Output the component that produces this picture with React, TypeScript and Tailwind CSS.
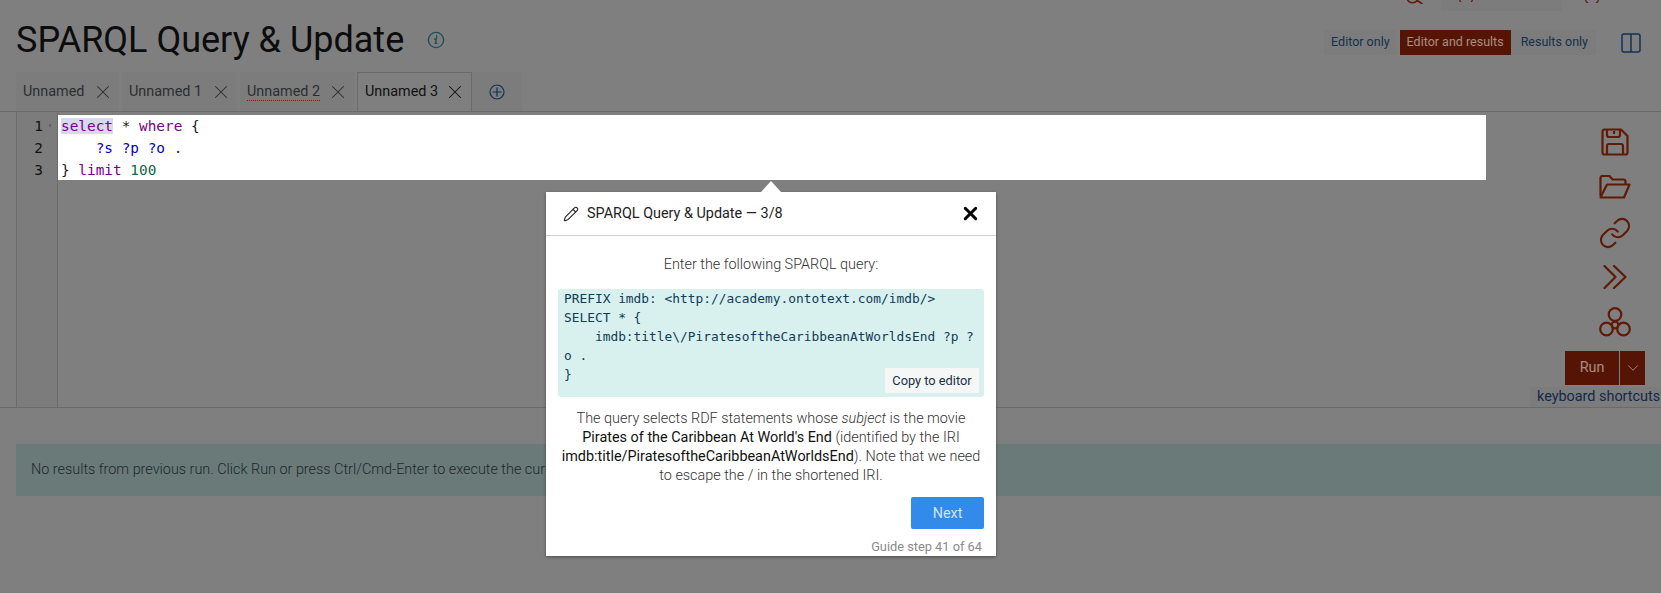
import { Pencil, X, ChevronDown, Link } from 'lucide-react';

const tabs = [
  { name: 'Unnamed', width: 'w-[103px]' },
  { name: 'Unnamed 1', width: 'w-[115px]' },
  { name: 'Unnamed 2', width: 'w-[114px]', warn: true },
];

const mono = "font-['DejaVu_Sans_Mono',monospace]";
const red = '#601a06';

function InfoIcon() {
  return (
    <svg width="18" height="18" viewBox="0 0 18 18" fill="none" stroke="#1f5058" strokeWidth="1.4">
      <circle cx="9" cy="9" r="7.6" />
      <path d="M7.6 8h1.8l-1 4.4h1.6M9.6 4.8v1.4" strokeLinecap="round" />
    </svg>
  );
}

function SaveIcon() {
  return (
    <svg width="28" height="28" viewBox="0 0 28 28" fill="none" stroke={red} strokeWidth="2.2" strokeLinejoin="round">
      <path d="M3 1.5h17l6.5 6.5v16.5a2 2 0 0 1-2 2h-21a2 2 0 0 1-2-2v-21a2 2 0 0 1 2-2z" />
      <path d="M6 2v5a2 2 0 0 0 2 2h9a2 2 0 0 0 2-2V2M13 3v3M6 26v-8a2 2 0 0 1 2-2h12a2 2 0 0 1 2 2v8" />
    </svg>
  );
}

function FolderIcon() {
  return (
    <svg width="32" height="24" viewBox="0 0 32 24" fill="none" stroke={red} strokeWidth="2.2" strokeLinejoin="round">
      <path d="M1.5 21V3a2 2 0 0 1 2-2h7l3 3.5h11a2 2 0 0 1 2 2V9" />
      <path d="M1.5 22.5L8 9.5h22.5l-5.5 13z" />
    </svg>
  );
}

function DoubleChevron() {
  return (
    <svg width="24" height="24" viewBox="0 0 24 24" fill="none" stroke={red} strokeWidth="2.2" strokeLinecap="round" strokeLinejoin="round">
      <path d="M1.5 1l11 11-11 11M11 1l11.5 11L11 23" />
    </svg>
  );
}

function ClusterIcon() {
  return (
    <svg width="32" height="30" viewBox="0 0 32 30" fill="none" stroke={red} strokeWidth="2.2">
      <circle cx="16" cy="7.5" r="6.3" />
      <circle cx="7.5" cy="22" r="6.3" />
      <circle cx="24.5" cy="22" r="6.3" />
      <circle cx="16" cy="18" r="3.4" />
    </svg>
  );
}

export default function App() {
  return (
    <div className="relative h-[593px] w-[1661px] overflow-hidden bg-[#7f7f7f] font-['Roboto',sans-serif] text-[14.4px] text-[#0f1a1e]">
      {/* top toolbar, mostly scrolled away */}
      <div className="flex h-[11px] justify-end pr-[62px]">
        <svg width="16" height="4" viewBox="0 0 16 4" fill="none" stroke={red} strokeWidth="1.6">
          <path d="M0.5 0a6 6 0 0 0 10 0M9.5 0l6 4" />
        </svg>
        <div className="ml-[18px] h-[11px] w-[121px] bg-[#7c7c7c] pl-[18px]">
          <svg width="14" height="2" viewBox="0 0 14 2" fill="none" stroke={red} strokeWidth="1.2">
            <path d="M0.5 0a7 7 0 0 0 13 0" />
          </svg>
        </div>
        <svg className="ml-[23px]" width="14" height="3" viewBox="0 0 14 3" fill="none" stroke={red} strokeWidth="1.2">
          <path d="M0.5 0a7 7 0 0 0 13 0" />
        </svg>
      </div>

      {/* heading */}
      <div className="flex h-[61px] items-center pt-[2px] pr-[20px] pl-[16px]">
        <h1 className="-mt-[5px] text-[36px] leading-none font-normal text-[#0c0c0c]">SPARQL Query &amp; Update</h1>
        <span className="-mt-[5px] ml-[23px]">
          <InfoIcon />
        </span>
        <div className="ml-auto flex items-center text-[12.5px] text-[#16304a]">
          <span className="flex h-[25px] items-center bg-[#7c7c7c] px-[7px]">Editor only</span>
          <span className="ml-[3px] flex h-[25px] items-center bg-[#561504] px-[7px] text-[#a68f85]">Editor and results</span>
          <span className="flex h-[25px] items-center bg-[#7c7c7c] pr-[8px] pl-[10px]">Results only</span>
          <svg className="ml-[25px]" width="20" height="20" viewBox="0 0 20 20" fill="none" stroke="#123356" strokeWidth="1.5">
            <rect x="1" y="1" width="18" height="18" rx="2" />
            <path d="M10 1v18" />
          </svg>
        </div>
      </div>

      {/* tabs */}
      <div className="flex h-[39px] gap-[3px] pl-[16px]">
        {tabs.map((tab) => (
          <div key={tab.name} className={`flex items-center justify-between bg-[#7c7c7c] pr-[5px] pl-[7px] text-[#2b2f31] ${tab.width}`}>
            <span className={tab.warn ? 'border-b border-dotted border-[#8a1a10] leading-[17px]' : ''}>{tab.name}</span>
            <X size={22} strokeWidth={1.1} />
          </div>
        ))}
        <div className="flex w-[115px] items-center justify-between border border-b-0 border-[#6b6b6b] bg-[#7f7f7f] pr-[5px] pl-[7px] text-[#111]">
          <span>Unnamed 3</span>
          <X size={22} strokeWidth={1.1} />
        </div>
        <div className="-ml-[3px] flex w-[50px] items-center justify-center bg-[#7c7c7c]">
          <svg width="16" height="16" viewBox="0 0 16 16" fill="none" stroke="#123356" strokeWidth="1.2">
            <circle cx="8" cy="8" r="7" />
            <path d="M8 3.5v9M3.5 8h9" />
          </svg>
        </div>
      </div>

      {/* editor */}
      <div className="flex h-[297px] border-y border-[#6b6b6b]">
        <div className="ml-[16px] flex flex-1 border-l border-[#6b6b6b]">
          <div className={`w-[41px] border-r border-[#6b6b6b] bg-[#7c7c7c] pt-[3px] text-[14.4px] leading-[22px] text-[#111] ${mono}`}>
            <div className="flex justify-end">1<span className="flex w-[14px] justify-center text-[8px] text-[#5c5c5c]">▾</span></div>
            <div className="flex justify-end pr-[14px]">2</div>
            <div className="flex justify-end pr-[14px]">3</div>
          </div>
          <div className="flex-1">
            <div className={`mt-[3px] h-[65px] w-[1428px] bg-white pl-[3px] text-[14.4px] leading-[22px] whitespace-pre text-[#222] ${mono}`}>
              <div><span className="bg-[#d8d8ee] text-[#770088]">select</span> * <span className="text-[#770088]">where</span> {'{'}</div>
              <div>    <span className="text-[#0000cc]">?s</span> <span className="text-[#0000cc]">?p</span> <span className="text-[#0000cc]">?o</span> .</div>
              <div>{'}'} <span className="text-[#770088]">limit</span> <span className="text-[#116644]">100</span></div>
            </div>
          </div>
        </div>
        <div className="flex w-[131px] flex-col">
          <div className="ml-[69px] flex w-[32px] flex-col items-center">
            <span className="mt-[16px] flex h-[28px]"><SaveIcon /></span>
            <span className="mt-[19px] flex h-[24px]"><FolderIcon /></span>
            <span className="mt-[19px] flex h-[29px] items-center"><Link size={34} strokeWidth={1.5} color={red} /></span>
            <span className="mt-[18px] flex h-[24px]"><DoubleChevron /></span>
            <span className="mt-[18px] flex h-[30px]"><ClusterIcon /></span>
          </div>
          <div className="mt-[14px] ml-[35px] flex h-[34px] text-[#a68f85]">
            <span className="flex w-[54px] items-center justify-center bg-[#561504]">Run</span>
            <span className="ml-px flex w-[25px] items-center justify-center bg-[#561504]"><ChevronDown size={18} strokeWidth={1.2} /></span>
          </div>
          <div className="mt-[2px] h-[20px] bg-[#7c7c7c] pl-[7px] leading-[20px] whitespace-nowrap text-[#13294a]">keyboard shortcuts</div>
        </div>
      </div>

      {/* results alert */}
      <div className="mt-[36px] ml-[16px] flex h-[52px] items-center bg-[#6a7a78] pl-[15px] font-light text-[#1c282c]">
        No results from previous run. Click Run or press Ctrl/Cmd-Enter to execute the current query or update.
      </div>

      {/* guide popover */}
      <div className="absolute top-[192px] left-[546px] w-[450px] bg-white shadow-[0_1px_3px_rgba(0,0,0,0.4)]">
        <div className="absolute -top-[11px] left-[215px] h-0 w-0 border-x-[10px] border-b-[11px] border-x-transparent border-b-white" />
        <div className="flex h-[44px] items-center border-b border-[#cfcfcf] pr-[15px] pl-[17px] text-[#222]">
          <Pencil size={16} strokeWidth={1.6} className="mr-[8px]" />
          <span>SPARQL Query &amp; Update — 3/8</span>
          <X size={21} strokeWidth={3.4} className="ml-auto text-black" />
        </div>
        <div className="px-[12px] pt-[19px] text-center leading-[19px] font-light text-[#333]">
          <p>Enter the following SPARQL query:</p>
          <div className={`relative mt-[15px] h-[108px] rounded-[3px] bg-[#d9f1ee] px-[6px] text-left text-[12.85px] leading-[19px] font-normal whitespace-pre text-[#0f3c59] ${mono}`}>
            <div>{'PREFIX imdb: <http://academy.ontotext.com/imdb/>'}</div>
            <div>{'SELECT * {'}</div>
            <div>{'    imdb:title\\/PiratesoftheCaribbeanAtWorldsEnd ?p ?'}</div>
            <div>{'o .'}</div>
            <div>{'}'}</div>
            <span className="absolute right-[5px] bottom-[4px] flex h-[25px] w-[94px] items-center justify-center bg-[#f5f6f6] font-['Roboto',sans-serif] text-[12.8px] text-[#16304a]">Copy to editor</span>
          </div>
          <p className="mt-[12px]">
            The query selects RDF statements whose <em>subject</em> is the movie{' '}
            <b className="font-normal text-[#111]">Pirates of the Caribbean At World's End</b> (identified by the IRI{' '}
            <b className="font-normal text-[#111]">imdb:title/PiratesoftheCaribbeanAtWorldsEnd</b>). Note that we need to escape the / in the shortened IRI.
          </p>
          <div className="mt-[12px] flex justify-end">
            <span className="flex h-[32px] w-[73px] items-center justify-center rounded-[2px] bg-[#328aeb] font-normal text-[#cfe4fb]">Next</span>
          </div>
          <p className="mt-[8px] pr-[2px] text-right text-[12.8px] font-normal text-[#8a8a8a]">Guide step 41 of 64</p>
        </div>
      </div>
    </div>
  );
}
